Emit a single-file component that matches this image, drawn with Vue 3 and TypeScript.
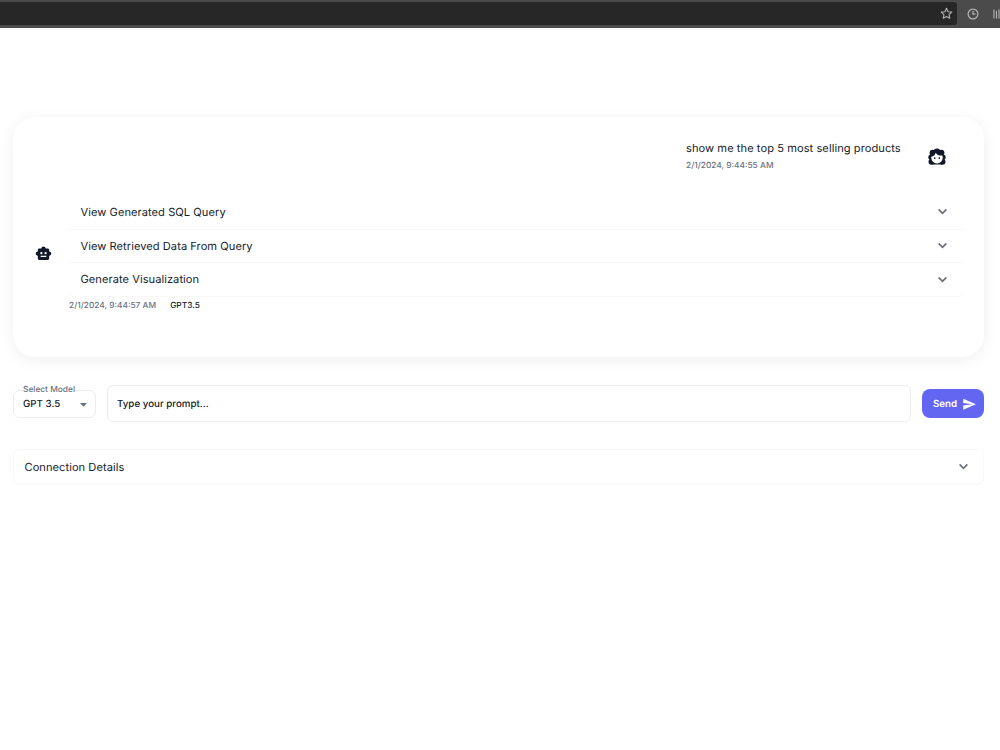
<script setup lang="ts">
import { ref } from 'vue'

const panels: string[] = [
  'View Generated SQL Query',
  'View Retrieved Data From Query',
  'Generate Visualization',
]
const prompt = ref('')
const chevron = 'M16.59 8.59 12 13.17 7.41 8.59 6 10l6 6 6-6z'
</script>

<template>
  <div class="page">
    <header class="browser">
      <div class="address">
        <svg class="star" viewBox="0 0 24 24"><path d="M12 2.5l2.9 6.2 6.8.8-5 4.6 1.3 6.7-6-3.3-6 3.3 1.3-6.7-5-4.6 6.8-.8z" /></svg>
      </div>
      <svg class="clock" viewBox="0 0 12 12"><circle cx="6" cy="6" r="4.9" /><path d="M6 3v3.2h2.3" /></svg>
      <svg class="library" viewBox="0 0 12 12"><path d="M1 1.5v9M3.5 3v7.5M6 1.5v9M8 2l3 8.5" /></svg>
    </header>

    <main class="content">
      <section class="chat">
        <div class="question">
          <div class="bubble">
            <p class="message">show me the top 5 most selling products</p>
            <span class="stamp">2/1/2024, 9:44:55 AM</span>
          </div>
          <svg class="user" viewBox="0 0 24 24">
            <g fill="#111827">
              <circle cx="12" cy="5" r="4.4" /><circle cx="6.2" cy="6.4" r="4.1" /><circle cx="17.8" cy="6.4" r="4.1" />
              <circle cx="4.1" cy="12.2" r="3.6" /><circle cx="19.9" cy="12.2" r="3.6" />
              <circle cx="4.7" cy="18.200" r="4" /><circle cx="19.3" cy="18.200" r="4" />
              <rect x="5" y="6" width="14" height="16" />
            </g>
            <path fill="#fff" d="M10.300 6.300c1.500 2.800 4.600 4.100 8.800 3.800.4.800.6 1.700.6 2.700a7.700 7.700 0 0 1-15.400 0v-1c3-.6 5.200-2.600 6-5.500z" />
            <circle cx="9" cy="13.400" r="1.150" fill="#111827" /><circle cx="15" cy="13.400" r="1.150" fill="#111827" />
          </svg>
        </div>

        <div class="answer">
          <svg class="robot" viewBox="0 0 24 24"><path d="M20 9V7c0-1.100-.9-2-2-2h-3c0-1.660-1.340-3-3-3S9 3.340 9 5H6c-1.100 0-2 .9-2 2v2c-1.660 0-3 1.340-3 3s1.340 3 3 3v4c0 1.100.9 2 2 2h12c1.100 0 2-.9 2-2v-4c1.660 0 3-1.340 3-3s-1.340-3-3-3zM7.500 11.500c0-.83.67-1.500 1.500-1.500s1.500.67 1.500 1.500S9.830 13 9 13s-1.500-.67-1.500-1.500zM16 17H8v-2h8v2zm-1-4c-.83 0-1.500-.67-1.500-1.500S14.170 10 15 10s1.500.67 1.500 1.500S15.830 13 15 13z" /></svg>
          <div class="result">
            <div class="accordion">
              <div v-for="panel in panels" :key="panel" class="panel">
                <span>{{ panel }}</span>
                <svg class="chevron" viewBox="0 0 24 24"><path :d="chevron" /></svg>
              </div>
            </div>
            <div class="meta"><span class="stamp">2/1/2024, 9:44:57 AM</span><span class="model">GPT3.5</span></div>
          </div>
        </div>
      </section>

      <form class="composer" @submit.prevent>
        <fieldset class="select">
          <legend>Select Model</legend>
          <div class="value">
            <span>GPT 3.5</span>
            <svg viewBox="0 0 24 24"><path d="m7 10 5 5 5-5z" /></svg>
          </div>
        </fieldset>
        <input v-model="prompt" class="prompt" type="text" placeholder="Type your prompt..." />
        <button class="send" type="submit">
          <span>Send</span>
          <svg viewBox="0 0 24 24"><path d="M2.010 21 23 12 2.010 3 2 10l15 2-15 2z" /></svg>
        </button>
      </form>

      <section class="connection panel">
        <span>Connection Details</span>
        <svg class="chevron" viewBox="0 0 24 24"><path :d="chevron" /></svg>
      </section>
    </main>
  </div>
</template>

<style>
body {
  margin: 0;
  background: #fff;
}
</style>

<style scoped>
.page {
  height: 750px;
  overflow: hidden;
  background: #fff;
  color: #161d2b;
  font-family: Inter, "Liberation Sans", sans-serif;
  text-rendering: geometricPrecision;
}
.page * {
  box-sizing: border-box;
  text-rendering: geometricPrecision;
}
.browser {
  display: flex;
  align-items: center;
  height: 28px;
  padding-bottom: 1px;
  background: #4b4b4b;
  overflow: hidden;
}
.address {
  display: flex;
  align-items: center;
  justify-content: flex-end;
  flex: 0 0 957px;
  height: 23px;
  padding-right: 4px;
  background: #272727;
  border-radius: 0 3px 3px 0;
}
.browser svg {
  flex: none;
  fill: none;
  stroke: #b5b5b5;
}
.star {
  width: 13px;
  height: 13px;
  stroke-width: 2;
  stroke-linejoin: round;
}
.clock {
  width: 12px;
  height: 12px;
  margin-left: 10px;
  stroke-width: 1.2;
}
.library {
  width: 12px;
  height: 12px;
  margin-left: 14px;
  stroke-width: 1.1;
}
.content {
  padding: 89px 16px 0 13px;
}
.chat {
  height: 240px;
  padding: 22px 21.500px 0 22px;
  border-radius: 22px;
  box-shadow: 0 3px 16px rgba(0, 0, 0, 0.065);
}
.question {
  display: flex;
  justify-content: flex-end;
  padding-right: 16.500px;
}
.bubble {
  width: 242px;
}
.message {
  margin: 0;
  font-size: 11.1px;
  line-height: 18px;
  letter-spacing: 0.06px;
  white-space: nowrap;
}
.stamp {
  display: block;
  color: #6b7280;
  font-size: 8.35px;
  line-height: 17px;
  font-weight: 500;
  white-space: nowrap;
}
.question .stamp {
  padding-top: 1px;
}
.user {
  width: 18px;
  height: 18px;
  margin-top: 8.500px;
}
.answer {
  display: flex;
  margin-top: 20px;
}
.robot {
  flex: none;
  width: 17px;
  height: 17px;
  margin: 49.500px 17px 0 0;
  fill: #111827;
}
.result {
  flex: 1;
}
.accordion {
  border-radius: 6px;
  box-shadow: 0 1px 1px rgba(0, 0, 0, 0.03), 0 0 1px rgba(0, 0, 0, 0.02);
}
.panel {
  display: flex;
  align-items: center;
  justify-content: space-between;
  height: 33.500px;
  padding: 0 12px 0 11.500px;
  font-size: 11.1px;
  letter-spacing: 0.05px;
}
.panel + .panel {
  border-top: 1px solid #f8f8f8;
}
.chevron {
  width: 17px;
  height: 17px;
  fill: #666c76;
  stroke: #666c76;
  stroke-width: 0.5;
}
.meta {
  display: flex;
  gap: 14px;
  padding-top: 2px;
}
.model {
  font-size: 8.35px;
  line-height: 17px;
  font-weight: 500;
}
.composer {
  display: flex;
  align-items: center;
  height: 37px;
  margin-top: 28px;
}
.select {
  width: 83px;
  height: 33px;
  min-width: 0;
  margin: -4px 11px 0 0;
  padding: 0 3px 0 9px;
  border: 1px solid #ededef;
  border-radius: 6px;
}
.select legend {
  padding: 0;
  color: #6b7280;
  font-size: 8.35px;
  line-height: 10px;
  font-weight: 500;
}
.value {
  display: flex;
  align-items: center;
  justify-content: space-between;
  height: 19px;
  font-size: 9.75px;
  font-weight: 500;
}
.value svg {
  width: 17px;
  height: 17px;
  margin-top: -1px;
  fill: #6b7280;
}
.prompt {
  flex: 1;
  min-width: 0;
  height: 37px;
  margin-right: 11px;
  padding: 2px 9px 0;
  border: 1px solid #ededef;
  border-radius: 6px;
  outline: none;
  background: #fff;
  color: #111827;
  font: 500 9.75px Inter, "Liberation Sans", sans-serif;
}
.prompt::placeholder {
  color: #111827;
  opacity: 1;
}
.send {
  display: flex;
  align-items: center;
  justify-content: space-between;
  width: 62px;
  height: 29px;
  padding: 1px 8px 0 11px;
  border: 0;
  border-radius: 8px;
  background: #6366f1;
  color: #fff;
  font: 600 9.75px Inter, "Liberation Sans", sans-serif;
}
.send span {
  padding-top: 1px;
}
.send svg {
  width: 14.500px;
  height: 14.500px;
  fill: #fff;
}
.connection {
  height: 35px;
  margin-top: 27px;
  border: 1px solid #f8f8f8;
  border-radius: 6px;
  padding: 0 11px 0 10.500px;
  box-shadow: 0 1px 1px rgba(0, 0, 0, 0.02);
}
</style>
